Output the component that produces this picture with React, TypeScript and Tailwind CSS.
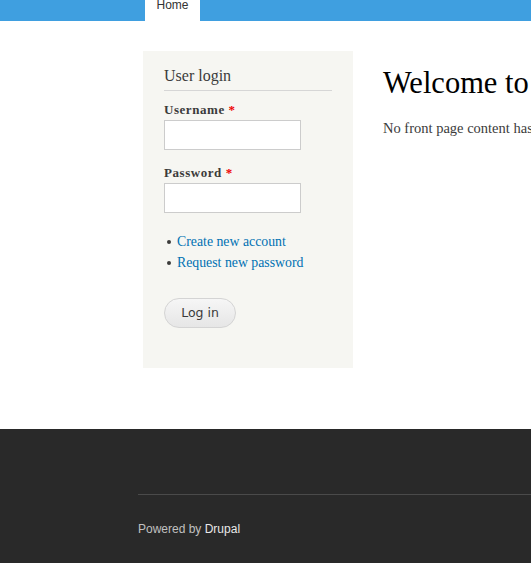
import React from "react";

const serif = { fontFamily: '"Liberation Serif", Georgia, serif' };

export default function App() {
  return (
    <div className="w-[531px] h-[563px] bg-white flex flex-col overflow-hidden" style={serif}>
      <div className="h-[21px] bg-[#3f9fe0] flex shrink-0">
        <div className="ml-[145px] w-[55px] h-[21px] bg-white flex justify-center shrink-0">
          <span className="text-[12px] leading-[12px] text-[#333] mt-[-1px]" style={{ fontFamily: '"Liberation Sans", Arial, sans-serif' }}>Home</span>
        </div>
      </div>
      <div className="flex h-[408px] shrink-0 pt-[30px]">
        <div className="ml-[143px] w-[210px] shrink-0 h-[317px] bg-[#f6f6f2] px-[21px] pt-[15px]">
          <h2 className="text-[16px] leading-[20px] text-[#3b3b3b] pb-[4px] border-b border-[#d6d6d6]">User login</h2>
          <div className="mt-[10px]">
            <label className="block text-[13px] leading-[17px] font-bold text-[#3b3b3b] tracking-[0.55px]">Username <span className="text-[#e00]">*</span></label>
            <div className="mt-[2px] w-[137px] h-[30px] bg-white border border-[#ccc]"></div>
          </div>
          <div className="mt-[14px]">
            <label className="block text-[13px] leading-[17px] font-bold text-[#3b3b3b] tracking-[0.55px]">Password <span className="text-[#e00]">*</span></label>
            <div className="mt-[2px] w-[137px] h-[30px] bg-white border border-[#ccc]"></div>
          </div>
          <ul className="mt-[18px] text-[13.8px] leading-[21px]">
            <li className="flex items-center"><span className="w-[4px] h-[4px] rounded-full bg-[#3b3b3b] ml-[3px] mr-[6px]"></span><span className="text-[#0071b3]">Create new account</span></li>
            <li className="flex items-center"><span className="w-[4px] h-[4px] rounded-full bg-[#3b3b3b] ml-[3px] mr-[6px]"></span><span className="text-[#0071b3]">Request new password</span></li>
          </ul>
          <button className="mt-[25px] w-[72px] h-[30px] rounded-full border border-[#d4d4d4] bg-gradient-to-b from-[#f6f6f6] to-[#e6e6e6] text-[12.5px] text-[#3a3a3a]" style={{ fontFamily: '"DejaVu Sans", sans-serif' }}>Log in</button>
        </div>
        <div className="ml-[30px] pt-[14px] whitespace-nowrap">
          <h1 className="text-[30.5px] leading-[36px] text-black">Welcome to</h1>
          <p className="mt-[18px] text-[14.5px] leading-[18px] text-[#3b3b3b]">No front page content has been created yet.</p>
        </div>
      </div>
      <div className="flex-1 bg-[#292929] pt-[65px]">
        <div className="ml-[138px] border-t border-[#4a4a4a]"></div>
        <div className="ml-[138px] mt-[25px] text-[12px] text-[#c0c0c0]" style={{ fontFamily: '"Liberation Sans", Arial, sans-serif' }}>
          Powered by <span className="text-[#e8e8e8]">Drupal</span>
        </div>
      </div>
    </div>
  );
}
